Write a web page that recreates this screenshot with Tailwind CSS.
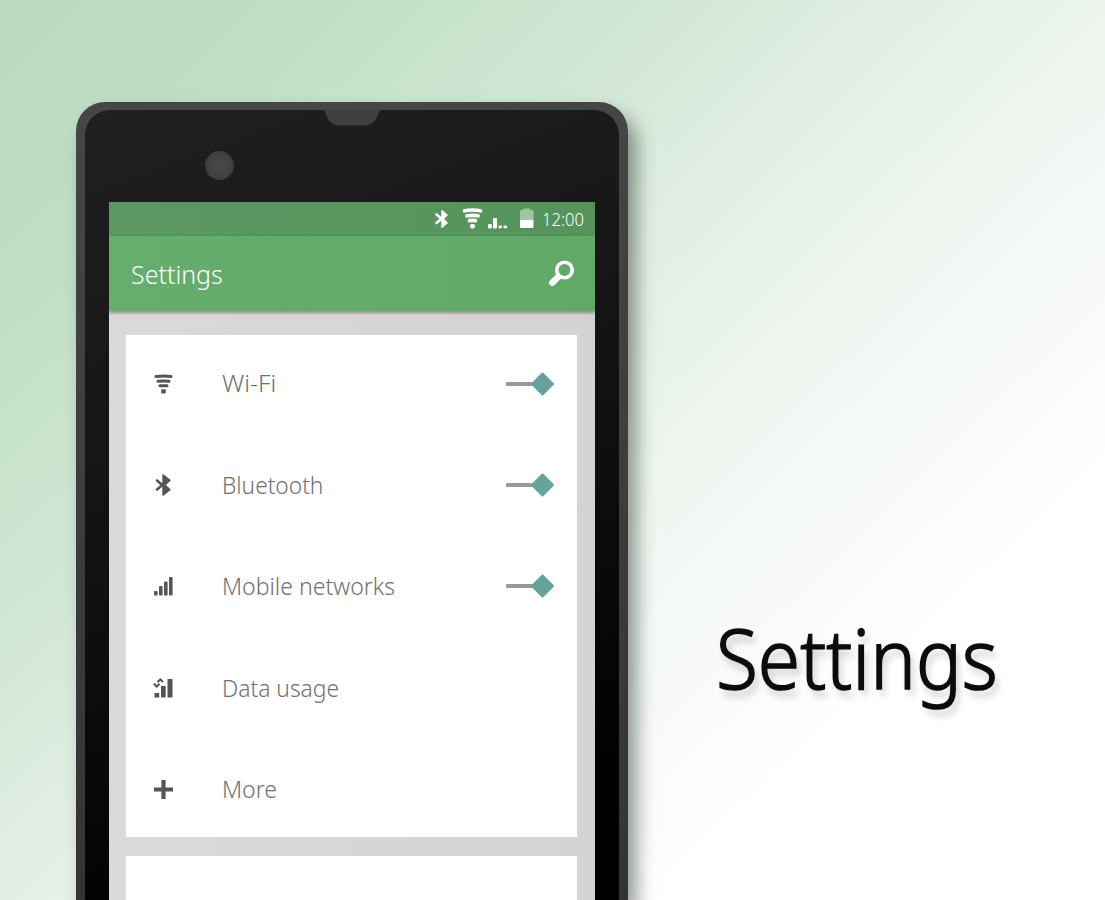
<!DOCTYPE html>
<html lang="en">
<head>
<meta charset="utf-8">
<title>Settings</title>
<script src="https://cdn.jsdelivr.net/npm/@tailwindcss/browser@4"></script>
</head>
<body class="h-[900px] w-[1105px] overflow-hidden bg-[linear-gradient(136deg,#bad9be_0%,#c1dfc6_17%,#cae4ce_25%,#d1e7d6_33%,#dcebdf_40%,#eaf3eb_52%,#f3f9f5_63%,#f9faf9_70%,#ffffff_78%)] font-['Noto_Sans','Open_Sans',sans-serif]">
<main class="flex h-full items-start overflow-hidden">
  <section class="ml-[76px] mt-[102px] h-[798px] w-[552px] shrink-0 rounded-t-[29px] bg-linear-to-b from-[#464646] to-[#343434] px-[9px] pt-[8px] shadow-[9px_12px_18px_rgba(45,60,50,0.5)]">
    <div class="relative h-full overflow-hidden rounded-t-[25px] bg-[linear-gradient(160deg,#202020_0%,#161616_35%,#0c0c0c_60%,#000_88%)] px-[24px] pt-[92px]">
      <svg class="absolute left-[239px] top-0" width="56" height="16" viewBox="0 0 56 16"><path d="M0 0H56C53 7 50 15.500 41 15.500H15C6 15.500 3 7 0 0Z" fill="#404040"/></svg>
      <div class="absolute left-[120px] top-[41px] size-[29px] rounded-full bg-[radial-gradient(circle,#4a4a47_0%,#434343_45%,#3d3d3d_70%)]"></div>
      <div class="h-[698px] w-[486px] overflow-hidden bg-linear-to-r from-[#dadada] to-[#d3d3d3]">
        <div class="flex h-[34px] items-center bg-linear-to-r from-[#5c9862] to-[#54945a] text-white">
          <svg class="ml-[324px] shrink-0" width="78" height="34" viewBox="0 0 78 34">
            <path d="M3.500 12.500 12.500 20M3.500 21 12.500 13" fill="none" stroke="#fff" stroke-width="2.600" stroke-linecap="round"/>
            <path d="M8.300 9Q8.300 7.500 9.500 8.300L15 13 11 17 15 21 9.500 25.700Q8.300 26.500 8.300 25Z" fill="#fff"/>
            <g fill="none" stroke="#fff" stroke-linecap="round" stroke-width="3.700"><path d="M31.500 8.800Q39.500 7.200 47.500 8.800M34 13.800Q39.500 12.800 45 13.800M36.500 18.600Q39.500 18.200 42.500 18.600"/></g><rect x="37" y="22" width="5" height="4.500" rx="2" fill="#fff"/>
            <g fill="#fff"><rect x="55" y="22" width="3.800" height="4.500" rx="1"/><rect x="60" y="16" width="4" height="10.500" rx="1"/><rect x="65.500" y="23.500" width="3.500" height="2.700" rx="1"/><rect x="70.500" y="23.500" width="3.500" height="2.700" rx="1"/></g>
          </svg>
          <svg class="ml-[9px] shrink-0" width="14" height="34" viewBox="0 0 14 34"><path d="M0 9q0-1 1-1H3.500V6.500H10V8H12.500q1 0 1 1V18H0Z" fill="#a0c5a3"/><path d="M0 18H13.500V25q0 1-1 1H1q-1 0-1-1Z" fill="#fff"/></svg>
          <span class="ml-[8px] inline-block origin-left scale-x-[0.92] whitespace-nowrap text-[18px] font-light leading-none">12:00</span>
        </div>
        <header class="flex h-[75px] items-center bg-linear-to-r from-[#65ae6e] to-[#60a967] pl-[22px] pr-[20px] text-white shadow-[0_2px_3px_rgba(0,0,0,0.35)]">
          <h1 class="origin-left scale-x-[0.96] text-[26px] font-light leading-none">Settings</h1>
          <svg class="ml-auto" width="27" height="28" viewBox="0 0 27 28" fill="none" stroke="#fff"><circle cx="16.500" cy="10" r="7.800" stroke-width="3.600"/><path d="M11 16 9 18" stroke-width="4.500"/><path d="M9.300 17.700 4.300 22.700" stroke-width="6.500" stroke-linecap="round"/></svg>
        </header>
        <div class="flex flex-col gap-[19px] px-[17px] pt-[24px]">
          <ul class="h-[502px] w-[451px] bg-white text-[24px] font-light leading-none text-[#707070]">
            <li class="-mt-[2px] flex h-[101.400px] items-center pl-[28px] pr-[22px]">
              <svg width="19" height="20" viewBox="0 0 19 20" fill="none" stroke="#555" stroke-width="3" stroke-linecap="round"><path d="M2 2.500Q9.500 1.500 17 2.500M4 7.300Q9.500 6.600 15 7.300M6 11.800Q9.500 11.500 13 11.800"/><rect x="7.200" y="15.200" width="4.600" height="4.300" rx="1" fill="#555" stroke="none"/></svg>
              <span class="-mt-[2px] ml-[49px] origin-left scale-x-[1.03]">Wi-Fi</span>
              <svg class="ml-auto" width="49" height="26" viewBox="0 0 49 26"><rect x="0" y="11" width="30" height="4" rx="1" fill="#999"/><path d="M36.500 2.500 47 13 36.500 23.500 26 13Z" fill="#65a39b" stroke="#65a39b" stroke-width="2" stroke-linejoin="round"/></svg>
            </li>
            <li class="flex h-[101.400px] items-center pl-[28px] pr-[22px]">
              <svg width="19" height="22" viewBox="0 0 19 22"><path d="M3 6.500 13 15M3 15.500 13 7" stroke="#555" stroke-width="2.600" stroke-linecap="round"/><path d="M8.300 1Q8.300 0 9.800.500L17 6.300 12 11 17 15.700 9.800 21.500Q8.300 22 8.300 21Z" fill="#555"/></svg>
              <span class="ml-[49px] origin-left scale-x-[0.945]">Bluetooth</span>
              <svg class="ml-auto" width="49" height="26" viewBox="0 0 49 26"><rect x="0" y="11" width="30" height="4" rx="1" fill="#999"/><path d="M36.500 2.500 47 13 36.500 23.500 26 13Z" fill="#65a39b" stroke="#65a39b" stroke-width="2" stroke-linejoin="round"/></svg>
            </li>
            <li class="flex h-[101.400px] items-center pl-[28px] pr-[22px]">
              <svg width="19" height="20" viewBox="0 0 19 20" fill="#555"><rect x="0" y="15" width="3.600" height="4.500" rx="1"/><rect x="5" y="10" width="3.600" height="9.500" rx="1"/><rect x="10" y="5.500" width="3.600" height="14" rx="1"/><rect x="15" y="1" width="3.600" height="18.500" rx="1"/></svg>
              <span class="ml-[49px] origin-left scale-x-[0.96] whitespace-nowrap">Mobile networks</span>
              <svg class="ml-auto" width="49" height="26" viewBox="0 0 49 26"><rect x="0" y="11" width="30" height="4" rx="1" fill="#999"/><path d="M36.500 2.500 47 13 36.500 23.500 26 13Z" fill="#65a39b" stroke="#65a39b" stroke-width="2" stroke-linejoin="round"/></svg>
            </li>
            <li class="flex h-[101.400px] items-center pl-[27px]">
              <svg width="20" height="20" viewBox="0 0 20 20" fill="#555"><rect x="1.500" y="15" width="4.700" height="4.500" rx=".5"/><rect x="8" y="8" width="4.700" height="11.500" rx=".5"/><rect x="14.500" y="1" width="5" height="18.500" rx=".5"/><path d="M.8 5.800 3.700 8.500 6.500 5.800M4.500 4 7.300 1.400 10 4" fill="none" stroke="#555" stroke-width="2"/></svg>
              <span class="ml-[49px] origin-left scale-x-[0.95]">Data usage</span>
            </li>
            <li class="flex h-[101.400px] items-center pl-[28px]">
              <svg width="19" height="19" viewBox="0 0 19 19"><path d="M9.500 2V17M2 9.500H17" stroke="#555" stroke-width="4.200" stroke-linecap="square"/></svg>
              <span class="ml-[49px] origin-left scale-x-[0.96]">More</span>
            </li>
          </ul>
          <div class="h-[44px] w-[451px] bg-white"></div>
        </div>
      </div>
    </div>
  </section>
  <h2 class="ml-[88px] mt-[602px] origin-left scale-x-[0.935] whitespace-nowrap text-[82px] font-light leading-[110px] text-[#0c0c0c] [-webkit-text-stroke:1.500px_#0c0c0c] [text-shadow:4px_7px_8px_rgba(0,0,0,0.2),0_0_2px_rgba(0,0,0,0.3)]">Settings</h2>
</main>
</body>
</html>
